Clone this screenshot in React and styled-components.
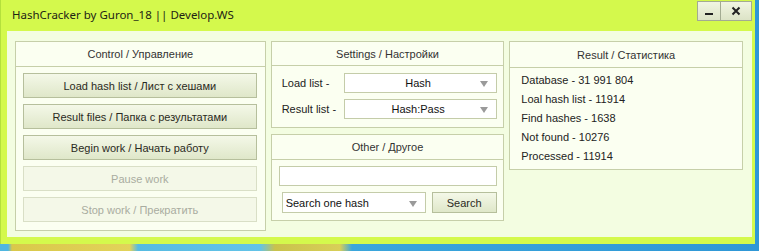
import styled, { createGlobalStyle } from "styled-components";

const GlobalStyle = createGlobalStyle`
  html, body {
    margin: 0;
    padding: 0;
    width: 759px;
    height: 251px;
    overflow: hidden;
  }
  body {
    background: linear-gradient(
      90deg,
      #4fb6e0 0px,
      #4fb6e0 8px,
      #d9c84a 12px,
      #e2d35a 130px,
      #56bbe2 138px,
      #63c3e8 260px,
      #c9c24c 275px,
      #d8cf58 340px,
      #3aa6dc 352px,
      #2f97d6 100%
    );
    font-family: "Liberation Sans", Arial, sans-serif;
  }
`;

const Window = styled.div`
  width: 755px;
  height: 244px;
  box-sizing: border-box;
  background: #d4f94c;
  border-left: 1px solid #b4e03c;
  padding: 0 3px 7px 6px;
  display: flex;
  flex-direction: column;
`;

const TitleBar = styled.div`
  height: 31px;
  display: flex;
  align-items: flex-start;
  justify-content: space-between;
`;

const Title = styled.div`
  padding: 7px 0 0 5px;
  font-family: "Noto Sans", "Open Sans", sans-serif;
  font-size: 11.5px;
  color: #1e2414;
`;

const Caption = styled.div`
  display: flex;
  padding-top: 1px;
`;

const CaptionButton = styled.div`
  width: ${(p) => p.$w}px;
  height: 20px;
  box-sizing: border-box;
  border: 1px solid #a3ab92;
  margin-left: -1px;
  background: linear-gradient(#f1f5e2, #dce3c6);
  display: flex;
  align-items: center;
  justify-content: center;
`;

const Client = styled.div`
  flex: 1;
  background: #f3fde1;
  padding: 10px 9px 0 8px;
  display: flex;
  gap: 5px;
  align-items: flex-start;
`;

const Column = styled.div`
  display: flex;
  flex-direction: column;
  gap: 6px;
  width: ${(p) => p.$w}px;
`;

const Panel = styled.div`
  box-sizing: border-box;
  height: ${(p) => p.$h}px;
  border: 1px solid #c6cfa9;
  background: #fbfff1;
  display: flex;
  flex-direction: column;
`;

const PanelHeader = styled.div`
  height: ${(p) => p.$h || 23}px;
  box-sizing: border-box;
  border-bottom: 1px solid #c6cfa9;
  display: flex;
  align-items: center;
  justify-content: center;
  font-size: 11px;
  color: #333;
`;

const ButtonStack = styled.div`
  display: flex;
  flex-direction: column;
  gap: 6px;
  padding: 6px 8px 0 7px;
`;

const Button = styled.div`
  height: 25px;
  box-sizing: border-box;
  border: 1px solid ${(p) => (p.$disabled ? "#d9dfc6" : "#b6bf9c")};
  background: ${(p) =>
    p.$disabled ? "#f4f8e8" : "linear-gradient(#f4f8e8, #dfe7c9)"};
  color: ${(p) => (p.$disabled ? "#a9aca0" : "#2a2a22")};
  font-size: 11px;
  display: flex;
  align-items: center;
  justify-content: center;
  width: ${(p) => (p.$w ? `${p.$w}px` : "auto")};
  flex-shrink: 0;
`;

const Rows = styled.div`
  display: flex;
  flex-direction: column;
  gap: 6px;
  padding: ${(p) => p.$pad};
`;

const Row = styled.div`
  display: flex;
  align-items: center;
  gap: ${(p) => p.$gap || 0}px;
  padding-left: ${(p) => p.$indent || 0}px;
`;

const Label = styled.div`
  width: 62px;
  padding-left: 10px;
  font-size: 11px;
  color: #222;
`;

const Select = styled.div`
  position: relative;
  width: ${(p) => p.$w}px;
  height: ${(p) => p.$h || 20}px;
  box-sizing: border-box;
  border: 1px solid #c4cca9;
  background: #fff;
  font-size: 11px;
  color: #111;
  display: flex;
  align-items: center;
  justify-content: ${(p) => (p.$left ? "flex-start" : "center")};
  padding: ${(p) => (p.$left ? "0 0 0 3px" : "0 4px 0 0")};
`;

const Arrow = styled.div`
  position: absolute;
  right: 8px;
  top: 50%;
  margin-top: -2px;
  width: 0;
  height: 0;
  border-left: 4px solid transparent;
  border-right: 4px solid transparent;
  border-top: 6px solid #9a9a9a;
`;

const TextInput = styled.div`
  width: 218px;
  height: 20px;
  box-sizing: border-box;
  border: 1px solid #c4cca9;
  background: #fff;
`;

const Stats = styled.div`
  padding: 3px 0 0 11px;
  font-size: 11px;
  line-height: 19px;
  color: #222;
`;

const MinIcon = () => (
  <svg width="10" height="10" viewBox="0 0 10 10">
    <rect x="1" y="7" width="8" height="2" fill="#222" />
  </svg>
);

const CloseIcon = () => (
  <svg width="10" height="10" viewBox="0 0 10 10">
    <path d="M1.5 1.5 L8.5 8.5 M8.5 1.5 L1.5 8.5" stroke="#222" strokeWidth="2" />
  </svg>
);

const stats = [
  "Database - 31 991 804",
  "Loal hash list - 11914",
  "Find hashes - 1638",
  "Not found - 10276",
  "Processed - 11914",
];

export default function App() {
  return (
    <>
      <GlobalStyle />
      <Window>
        <TitleBar>
          <Title>HashCracker by Guron_18 || Develop.WS</Title>
          <Caption>
            <CaptionButton $w={24}>
              <MinIcon />
            </CaptionButton>
            <CaptionButton $w={32}>
              <CloseIcon />
            </CaptionButton>
          </Caption>
        </TitleBar>
        <Client>
          <Column $w={251}>
            <Panel $h={190}>
              <PanelHeader $h={25}>Control / Управление</PanelHeader>
              <ButtonStack>
                <Button>Load hash list / Лист с хешами</Button>
                <Button>Result files / Папка с результатами</Button>
                <Button>Begin work / Начать работу</Button>
                <Button $disabled>Pause work</Button>
                <Button $disabled>Stop work / Прекратить</Button>
              </ButtonStack>
            </Panel>
          </Column>
          <Column $w={234}>
            <Panel $h={87}>
              <PanelHeader $h={24}>Settings / Настройки</PanelHeader>
              <Rows $pad="7px 0 0 0">
                <Row>
                  <Label>Load list -</Label>
                  <Select $w={153}>
                    Hash
                    <Arrow />
                  </Select>
                </Row>
                <Row>
                  <Label>Result list -</Label>
                  <Select $w={153}>
                    Hash:Pass
                    <Arrow />
                  </Select>
                </Row>
              </Rows>
            </Panel>
            <Panel $h={87}>
              <PanelHeader $h={25}>Other / Другое</PanelHeader>
              <Rows $pad="6px 0 0 7px">
                <TextInput />
                <Row $gap={6} $indent={3}>
                  <Select $w={144} $h={21} $left>
                    Search one hash
                    <Arrow />
                  </Select>
                  <Button $w={65} style={{ height: 21 }}>
                    Search
                  </Button>
                </Row>
              </Rows>
            </Panel>
          </Column>
          <Column $w={234}>
            <Panel $h={129}>
              <PanelHeader $h={26}>Result / Статистика</PanelHeader>
              <Stats>
                {stats.map((s) => (
                  <div key={s}>{s}</div>
                ))}
              </Stats>
            </Panel>
          </Column>
        </Client>
      </Window>
    </>
  );
}
